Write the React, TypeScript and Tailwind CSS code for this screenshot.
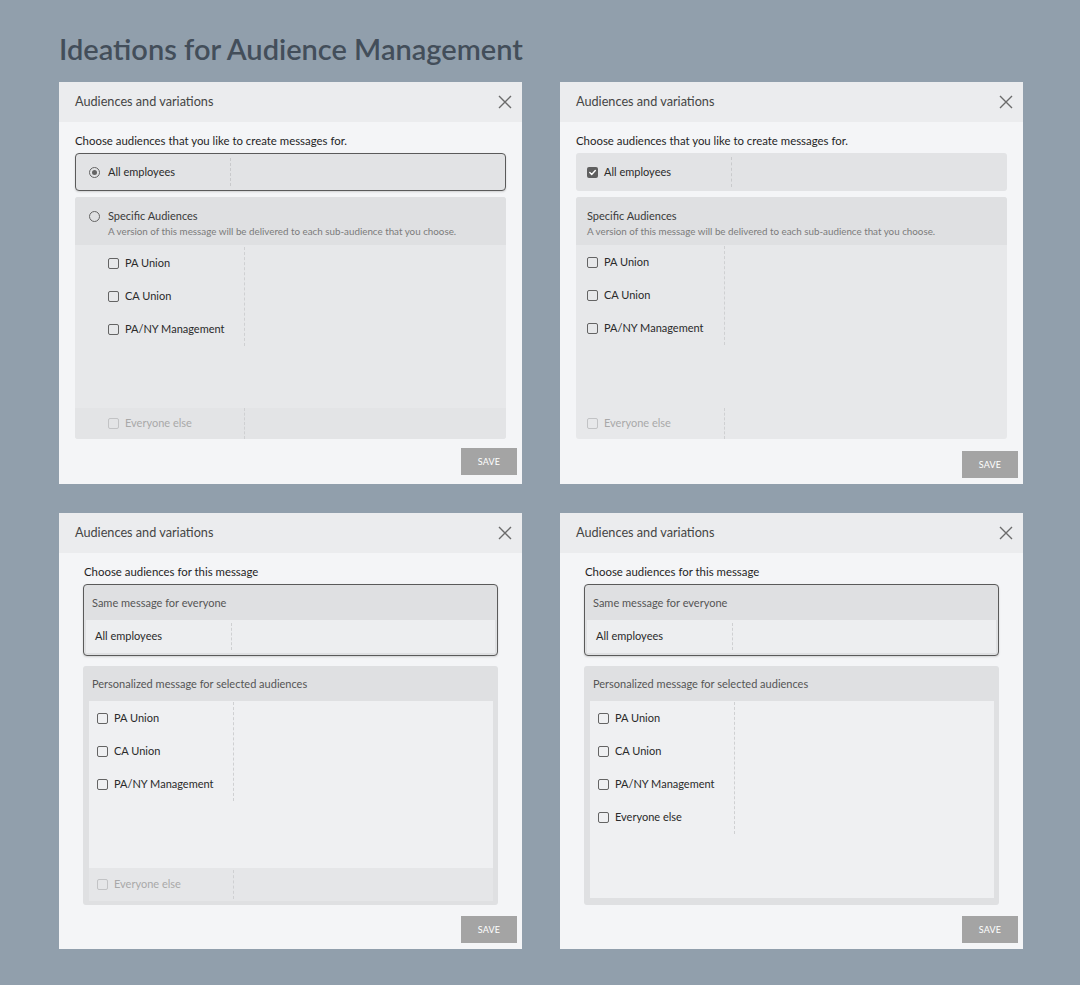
import React from 'react';

function CloseIcon() {
  return (
    <svg width="14" height="14" viewBox="0 0 14 14" className="block">
      <path d="M1 1L13 13M13 1L1 13" stroke="#6b6b6b" strokeWidth="1.4" fill="none" />
    </svg>
  );
}

function Checkbox({ checked = false, disabled = false }: { checked?: boolean; disabled?: boolean }) {
  if (checked) {
    return (
      <span className="flex h-[11px] w-[11px] shrink-0 items-center justify-center rounded-[2px] bg-[#5f5f5f]">
        <svg width="9" height="9" viewBox="0 0 9 9">
          <path d="M1.8 4.6L3.7 6.4L7.3 2.6" stroke="#fff" strokeWidth="1.4" fill="none" strokeLinecap="round" strokeLinejoin="round" />
        </svg>
      </span>
    );
  }
  return (
    <span
      className={
        disabled
          ? 'block h-[11px] w-[11px] shrink-0 rounded-[2px] border-[1.5px] border-[#c2c3c5]'
          : 'block h-[11px] w-[11px] shrink-0 rounded-[2px] border-[1.5px] border-[#646464]'
      }
    />
  );
}

function Radio({ checked = false }: { checked?: boolean }) {
  return (
    <span className="flex h-[11px] w-[11px] shrink-0 items-center justify-center rounded-full border-[1.5px] border-[#646464]">
      {checked ? <span className="block h-[5px] w-[5px] rounded-full bg-[#646464]" /> : null}
    </span>
  );
}

function Panel({ height, saveMb, children }: { height: string; saveMb: string; children: React.ReactNode }) {
  return (
    <div className={`flex flex-col bg-[#f4f5f7] ${height}`}>
      <div className="flex h-[40px] shrink-0 items-center justify-between bg-[#ebecee] pl-4 pr-[10px]">
        <span className="text-[12.7px] text-[#454545]">Audiences and variations</span>
        <CloseIcon />
      </div>
      {children}
      <button
        type="button"
        className={`mr-[5px] mt-auto h-[27px] w-[56px] self-end bg-[#a4a4a4] text-[9px] tracking-[0.02em] text-white ${saveMb}`}
      >
        SAVE
      </button>
    </div>
  );
}

const items = ['PA Union', 'CA Union', 'PA/NY Management'];

function ItemRow({ label, disabled = false }: { label: string; disabled?: boolean }) {
  return (
    <div className="flex h-[33px] items-center gap-[6px]">
      <Checkbox disabled={disabled} />
      <span className={disabled ? 'text-[11px] text-[#a9a9a9]' : 'text-[11px] text-[#2a2a2a]'}>{label}</span>
    </div>
  );
}

function TopLeft() {
  return (
    <Panel height="h-[402px]" saveMb="mb-[9px]">
      <div className="px-4 pt-[11px]">
        <p className="h-4 text-[11.4px] leading-4 text-[#1f1f1f]">Choose audiences that you like to create messages for.</p>
        <div className="mt-1 flex h-[38px] rounded-[4px] border border-[#5a5a5a] bg-[#e2e3e5] shadow-[0_1px_2px_rgba(0,0,0,0.15)]">
          <div className="my-[4px] flex w-[155px] items-center gap-[8px] border-r border-dashed border-[#c9cacc] pl-[13px]">
            <Radio checked />
            <span className="text-[11px] text-[#2a2a2a]">All employees</span>
          </div>
        </div>
        <div className="mt-[6px] flex h-[242px] flex-col overflow-hidden rounded-[3px] bg-[#e7e8ea]">
          <div className="flex h-[48px] shrink-0 gap-[8px] bg-[#dfe0e2] pl-[14px] pt-[12px]">
            <span className="mt-[2px]">
              <Radio />
            </span>
            <div className="flex flex-col">
              <span className="text-[11px] leading-[14px] text-[#3a3a3a]">Specific Audiences</span>
              <span className="mt-[2px] text-[9.8px] leading-[12px] text-[#7b7b7b]">
                A version of this message will be delivered to each sub-audience that you choose.
              </span>
            </div>
          </div>
          <div className="flex flex-1 flex-col">
            <div className="pt-[2px]">
              <div className="w-[170px] border-r border-dashed border-[#cfd0d2] pl-[33px]">
                {items.map((i) => (
                  <ItemRow key={i} label={i} />
                ))}
              </div>
            </div>
            <div className="mt-auto h-[31px] bg-[#e3e4e6]">
              <div className="flex h-full w-[170px] items-center border-r border-dashed border-[#cfd0d2] pl-[33px]">
                <div className="flex items-center gap-[6px]">
                  <Checkbox disabled />
                  <span className="text-[11px] text-[#a9a9a9]">Everyone else</span>
                </div>
              </div>
            </div>
          </div>
        </div>
      </div>
    </Panel>
  );
}

function TopRight() {
  return (
    <Panel height="h-[402px]" saveMb="mb-[6px]">
      <div className="px-4 pt-[11px]">
        <p className="h-4 text-[11.4px] leading-4 text-[#1f1f1f]">Choose audiences that you like to create messages for.</p>
        <div className="mt-1 flex h-[38px] rounded-[3px] bg-[#e2e3e5]">
          <div className="my-[4px] flex w-[156px] items-center gap-[6px] border-r border-dashed border-[#c9cacc] pl-[11px]">
            <Checkbox checked />
            <span className="text-[11px] text-[#2a2a2a]">All employees</span>
          </div>
        </div>
        <div className="mt-[6px] flex h-[242px] flex-col overflow-hidden rounded-[3px] bg-[#e7e8ea]">
          <div className="flex h-[48px] shrink-0 flex-col bg-[#dfe0e2] pl-[11px] pt-[12px]">
            <span className="text-[11px] leading-[14px] text-[#3a3a3a]">Specific Audiences</span>
            <span className="mt-[2px] text-[9.8px] leading-[12px] text-[#7b7b7b]">
              A version of this message will be delivered to each sub-audience that you choose.
            </span>
          </div>
          <div className="flex flex-1 flex-col">
            <div className="pt-[1px]">
              <div className="w-[149px] border-r border-dashed border-[#cfd0d2] pl-[11px]">
                {items.map((i) => (
                  <ItemRow key={i} label={i} />
                ))}
              </div>
            </div>
            <div className="mt-auto h-[31px]">
              <div className="flex h-full w-[149px] items-center border-r border-dashed border-[#cfd0d2] pl-[11px]">
                <div className="flex items-center gap-[6px]">
                  <Checkbox disabled />
                  <span className="text-[11px] text-[#a9a9a9]">Everyone else</span>
                </div>
              </div>
            </div>
          </div>
        </div>
      </div>
    </Panel>
  );
}

function Bottom({ everyoneInList }: { everyoneInList: boolean }) {
  const list = everyoneInList ? [...items, 'Everyone else'] : items;
  return (
    <Panel height="h-[436px]" saveMb="mb-[6px]">
      <div className="px-[24px] pt-[11px]">
        <p className="h-4 pl-px text-[11.4px] leading-4 text-[#1f1f1f]">Choose audiences for this message</p>
        <div className="mt-1 flex h-[72px] flex-col overflow-hidden rounded-[4px] border border-[#5a5a5a] bg-[#dfe0e2] shadow-[0_1px_2px_rgba(0,0,0,0.15)]">
          <div className="flex h-[35px] shrink-0 items-center pl-[8px] pt-[1px] text-[11px] text-[#555]">
            Same message for everyone
          </div>
          <div className="mx-[2px] mb-[2px] flex h-[33px] bg-[#edeef0]">
            <div className="my-[3px] flex w-[146px] items-center border-r border-dashed border-[#cfd0d2] pl-[9px]">
              <span className="text-[11px] text-[#2a2a2a]">All employees</span>
            </div>
          </div>
        </div>
        <div className="mt-[10px] flex h-[239px] flex-col rounded-[3px] bg-[#dfe0e2]">
          <div className="flex h-[35px] shrink-0 items-center pl-[9px] pt-[2px] text-[11px] text-[#555]">
            Personalized message for selected audiences
          </div>
          <div
            className={
              everyoneInList
                ? 'mb-[7px] ml-[6px] mr-[5px] flex flex-1 flex-col bg-[#eff0f2]'
                : 'mb-[4px] ml-[6px] mr-[5px] flex flex-1 flex-col bg-[#eff0f2]'
            }
          >
            <div className="pt-[1px]">
              <div className="w-[145px] border-r border-dashed border-[#cfd0d2] pl-[8px]">
                {list.map((i) => (
                  <ItemRow key={i} label={i} />
                ))}
              </div>
            </div>
            {everyoneInList ? null : (
              <div className="mt-auto h-[33px] bg-[#e5e6e8]">
                <div className="my-[2px] flex h-[29px] w-[145px] items-center border-r border-dashed border-[#cfd0d2] pl-[8px]">
                  <div className="flex items-center gap-[6px]">
                    <Checkbox disabled />
                    <span className="text-[11px] text-[#a9a9a9]">Everyone else</span>
                  </div>
                </div>
              </div>
            )}
          </div>
        </div>
      </div>
    </Panel>
  );
}

export default function App() {
  return (
    <div className="min-h-[985px] w-[1080px] bg-[#919fac] pl-[59px] pt-[32px] font-[Lato,sans-serif]">
      <h1 className="h-[34px] text-[29px] font-semibold leading-[34px] text-[#434e5a]">Ideations for Audience Management</h1>
      <div className="mt-[16px] grid w-[964px] grid-cols-[463px_463px] gap-x-[38px] gap-y-[29px]">
        <TopLeft />
        <TopRight />
        <Bottom everyoneInList={false} />
        <Bottom everyoneInList />
      </div>
    </div>
  );
}
